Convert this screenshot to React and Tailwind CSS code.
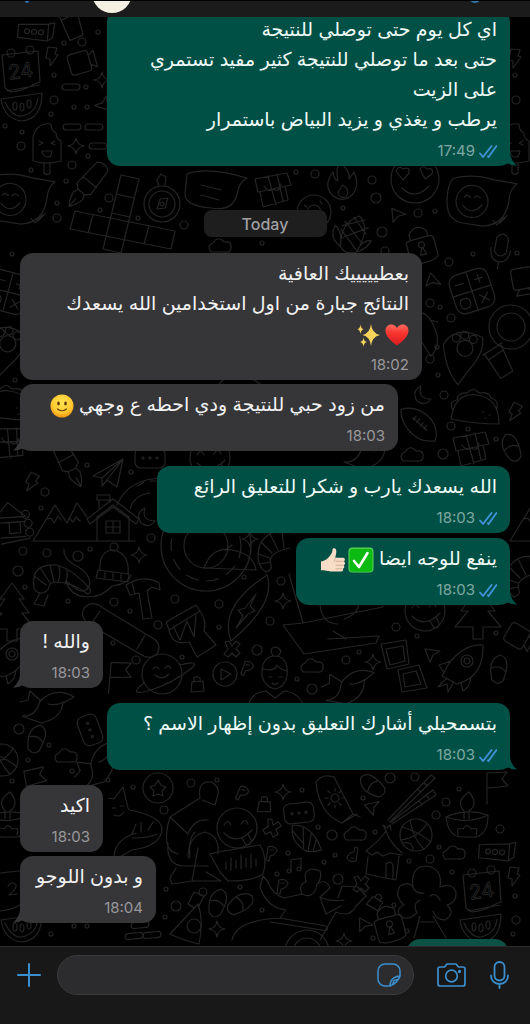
import React from 'react';

const shapes = {
  box: <><path d="M-18-6L12-9 18-11 17 4 12 8-18 7Z M12-9V8" /><circle cx="-9" cy="0" r="2.5" /><circle cx="-2" cy="0" r="2.5" /><circle cx="5" cy="0" r="2.5" /></>,
  calendar: <><path d="M-19-15L17-19 19 12C10 14 9 20-10 22L-16 18Z M-14 21L18 15" /><circle cx="-10" cy="-17" r="4" /><circle cx="9" cy="-20" r="4" /><text x="-13" y="8" fontSize="20" strokeWidth="0.9" transform="rotate(-8)">24</text></>,
  calendarEdge: <><path d="M-19-15L17-19 19 12C10 14 9 20-10 22L-16 18Z" /><path d="M-2-3Q2-9 6-4Q7 0-1 6L7 5" /></>,
  bolt: <path d="M-4-9L5-8 3-2 6-1-2 10-2 3-6 2Z" />,
  video: <path d="M-12-8Q-12-11-8-11L6-11Q9-11 9-8V7Q9 10 6 10L-8 10Q-12 10-12 7Z M9-5L15-9V8L9 4" />,
  star: <path d="M0-8Q1-1 8 0Q1 1 0 8Q-1 1-8 0Q-1-1 0-8Z" />,
  pill: <rect x="-9" y="-3" width="18" height="6" rx="3" />,
  melon: <><path d="M-21-6L20-12Q20 14 0 16Q-18 14-21-6Z M-17-3Q-10 12 0 11Q14 8 16-7" /><ellipse cx="-7" cy="1" rx="2" ry="4" /><ellipse cx="0" cy="2" rx="2" ry="4" /><ellipse cx="7" cy="-1" rx="2" ry="4" /></>,
  cursor: <path d="M-7-6L8-4 1 0-2 7Z" />,
  icepop: <path d="M-14 16V-8Q-10-23 4-21Q4-14 9-12Q9-6 14-4V16Q0 20-14 16Z M-3 18V28Q0 31 3 28V18 M-8-4l4 2-4 2 M8-4l-4 2 4 2 M-5 6H5Q4 13 0 12Q-4 12-5 6" />,
  pen: <path d="M-7-24Q0-30 7-24L9 5 4 9H-4L-9 5Z M-4 9L-6 14Q-5 21 0 28Q5 21 6 14L4 9 M0 28V18 M-9-4H9" />,
  smileBubble: <><path d="M-30-22Q-12-28 10-23L34-20Q27-14 27-4Q25 22 2 24L-18 22Q-36 20-35-3Q-35-16-30-22Z" /><circle cx="-10" cy="0" r="16" /><path d="M-18-4q3-4 6 0 M-8-4q3-4 6 0 M-19 4Q-10 15 0 3 M12 18l4 4 7-8 M19 20l7-8" /></>,
  grid: <path d="M-14-40L4-36-14 38-32 34Z M-19-21L-1-17 M-23-2L-5 2 M-60-4L40 16 36 34-65 14Z M-42 0L-47 18 M14 11L9 29" />,
  compass: <><circle r="18" cy="3" /><circle r="13" cy="3" /><path d="M-3-15l-2-6 4-6 5 3-1 9 M-5 8L-2-2 6-3 3 7Z" /><circle cy="3" r="2" /></>,
  bubble: <path d="M-28-16Q-8-24 32-12Q24-8 22 4Q18 22-4 18Q-30 16-30 4Z M-14-5L6 0 M-14 5L4 10" />,
  gift: <path d="M-18-10L14-16 18-4-15 3Z M-13 3L-10 18 15 11 12-3 M-5-13L3 16 M4-15L10 12 M-9-3Q-4 4 0 0Q7 4 8-5" />,
  flame: <path d="M-3-19Q8-9 6-2L11-9Q17 4 10 13Q0 23-11 14Q-20 4-10-9Q-9-1-5 0Q-8-12-3-19Z M0 4Q8 10 3 16Q-4 18-5 11Z" />,
  donut: <><circle r="17" /><circle r="7" /><path d="M-10-7l3 2 M6-11l2 3 M11 2l-4 1 M-11 6l4 0" /></>,
  heartFace: <><circle r="24" /><path d="M-19-8Q-16-14-12-10Q-5-13-6-6L-12 1Z M5-10Q9-15 12-10Q19-12 17-5L10 0Z M-13 9Q0 22 14 7" /></>,
  corn: <path d="M-8 18Q-16-5 0-17Q15-8 9 18 M-13 2L8 16 M-12-7L10 7 M-5-14L12-2 M12-9L-10 10 M6-15L-13-2 M-8 18Q-22 14-20 0Q-11 3-8 18Q0 25 9 18Q18 12 19 2Q10 5 9 18" />,
  calculator: <><rect x="-20" y="-20" width="40" height="40" rx="9" /><path d="M0-20V20 M-20 0H20 M-14-10H-6 M6-10H14 M10-14V-6 M6 6l8 8 M14 6l-8 8" /><rect x="-15" y="5" width="10" height="10" rx="4" /></>,
  lock: <path d="M-14-3Q-15-7-8-7H8Q14-7 14-3V14Q12 18 0 18Q-14 18-14 13Z M-9-7V-13Q0-23 9-13V-7 M0 3a3 3 0 1 1 1 0l2 7h-6Z" />,
  bag: <path d="M-5-2L6-3 7 7-6 8Z M-3-2V-6Q0-9 3-6V-2" />,
  mic: <path d="M-6-10Q0-18 6-10V4Q0 12-6 4Z M-10 1Q-9 14 0 14Q9 14 10 1 M0 14V21" />,
  paw: <><path d="M-20-8Q-10-30 18-20Q22-6 10 12L0 30Q-14 18-20-8Z" /><circle cx="2" cy="-7" r="8" /><circle cx="-8" cy="-16" r="4" /><circle cx="0" cy="-20" r="4" /><circle cx="9" cy="-17" r="4" /></>,
  cup: <path d="M-10-14L9-16 7 14-7 15Z M-12-14L11-16 M-9-7L8-9" />,
  moon: <path d="M-2-9Q-6 4 8 4Q2 12-6 6Q-12-4-2-9Z" />,
  football: <path d="M-21-10Q-6-18 10-6Q20 4 18 15Q2 20-10 9Q-20 0-21-10Z M-8-4L8 6 M-5-6l-2 4 M-1-4l-2 4 M3-1l-2 4 M7 1l-2 4" />,
  taco: <path d="M-24 9Q-20-18 2-15Q24-12 24 14Q0 14-24 9Z M-22 0Q-27-8-18-10Q-17-18-8-17Q-2-24 4-17Q14-19 16-12Q24-10 22-2 M8 2h1 M14 5h1 M10 8h1" />,
  plane: <path d="M-14 3L16-14 10 14 0 7-5 13-5 5Z M-5 5L16-14 0 7" />,
  mountain: <path d="M-30 22L-8-14 4 4 14-16 24-2 M-16 0l4-1 3 5 4-7 3 4 M6-1l4 4 3-5 4 4 M-30 22H72 M34 22V-2L50-14 66-2V22 M24 0L50-20 76 0 73 5 50-12 27 5Z M43 2H57V14H43Z M50 2V14 M43 8H57 M36-11V-19 M46-18V-19 M34-24H47V-19H34Z" />,
  rainbow: <path d="M-33-6Q-22-33 14-33 M-20-2Q-16-16 0-18 M-12-25l6-4 M0-30h6" />,
  planet: <><circle r="20" /><path d="M-18 9Q-35 22-14 17Q12 9 31-7Q37-14 18-9 M-9-5q3-4 6 0 M3-6q3-4 6 0 M-7 1Q0 7 7 0" /></>,
  tree: <path d="M0-29L-12-13H-7L-17 1H-10L-23 17H-5V29H5V17H23L10 1H17L7-13H12Z" />,
  shrimp: <path d="M-20 8Q-24-17 3-15Q20-10 36 9Q38 12 34 14Q18 2 1 2Q-5 2-6 10Q-15 17-20 8Z M-20-4L-8 5 M-13-11L-4 3 M-4-15L0 2 M5-14Q7-5 4 2 M13-10Q14-3 11 4 M-14 13L-20 24-10 26-6 15" />,
  croissant: <path d="M-14 22Q-26 14-20-6Q-10-24 14-17 M-14 22Q-6 20-10 12Q-10 2 10-2 M-22 4L-10 8 M-19-8L-8 3 M-10-16L-2 0 M2-19L4-2 M-20 14L-10 12" />,
  beanie: <><path d="M-13 2Q-14-18 1-18Q17-14 15 6 M-15 2L16 6 15 14-17 10Z M-8 4v6 M0 5v6 M8 6v6" /><circle cx="1" cy="-21" r="4" /></>,
  hammer: <path d="M-18-13Q0-24 15-15L16-8 8-11 3-7 8 20-1 21-5-5-14-3Z M-12-15l3 11" />,
  snake: <path d="M-26-23Q-27-14-17-8Q-1 0 0 11Q-3 22-12 18L-24 9 M-24 9Q-20 24-3 25Q13 25 22 14Q38 12 41 3" />,
  skate: <path d="M-35-22Q-27-29-17-21L34 10Q43 17 36 26Q29 31 20 25L-33-6Q-41-14-35-22Z M-20-18l-8 12 M25 6l-8 14" />,
  drum: <path d="M-24-6L6-23 10-17-21 2Z M-21 2Q-18 18-1 14L7 29 26 17 14 3Q17-8 10-17 M-16 0L-10 12-3-7 4 9 6-13" />,
  surf: <path d="M19-33Q29-5-17 33Q-30-1 19-33Z M8-14L-3 0-10 2-5 8-12 20 0 6 7 3 2-2Z" />,
  rings: <><circle r="45" /><circle r="35" strokeDasharray="12 9" /><circle r="22" /></>,
  dome: <path d="M-26 8Q-18-14 2-10Q24-6 26 10Z M-4-10L2-15" />,
  laptop: <path d="M-49-43L-35 6 M-35 6L45-10 43-20 M-35 6L-55 8-34 37 38 26 41 19-10 22 M-5 14l13 8 M-18-12Q-16 7 0 7 M20-20Q24-4 6 2" />,
  face: <><circle r="20" /><path d="M-13-3q4-7 7 0 M4-4q4-7 7 0 M-13 5Q0 18 15 2 M5 10l4 7q6 0 5-5l-3-6" /></>,
  play: <><circle r="12" /><path d="M-4-5L6 0-4 6Z" /></>,
  cross: <path d="M-7-7L-3-8 0-3 4-8 8-5 4 0 8 4 4 8 0 4-4 8-8 5-4 0Z" />,
  cloud: <path d="M-10 6Q-15 0-8-3Q-3-11 3-4Q11-5 10 2Q10 7 3 6Z" />,
  person: <path d="M-13 2Q-14-18 0-18Q14-17 12 2Q9 14 0 15Q-10 13-13 2Z M-12-5Q0-2 2-9Q6-4 12-3 M-2-18q-5-8 3-9q8 3 2 9 M-27 33Q-24 18-9 17L0 24 9 17Q24 18 29 33 M-6 3h3 M4 3h3 M-3 9q3 3 6 0" />,
  photos: <path d="M-16-20L9-24 12 0-10 5Z M-11-15L6-18 8-3-7 1Z M1 6L22 1 30 24 5 28Z M6 10L19 7 24 20 8 23Z" />,
  rocket: <><path d="M20-22Q0-23-15-2L-21 9-6 17Q21 10 20-22Z M-12-6L-24-2-19 6 M-2 16L0 24Q7 20 8 10 M-17 12l-8 8 9-3 1 8 5-9" /><circle cx="4" cy="-6" r="6" /><circle cx="4" cy="-6" r="3" /></>,
  flag: <path d="M-7 18V-13L13-14 8-7 14 0-6 2" />,
  cat: <path d="M-33-32L-28-31-19-43-15-26Q-14-20-12-20Q18-14 20-2Q20 16-10 20L-28 30Q-29 10-6 3 M-30-22h4 M-22-24h4 M-28-15Q-22-12-18-18 M-10 4l4-10 M-1 2V-8 M6 0l5-8 M-10 8Q8 8 15 4" />,
  starBadge: <><circle r="15" /><path d="M0-8L3-3 8-1 4 3 5 8 0 6-5 8-4 3-8-1-3-3Z" /></>,
  kneel: <path d="M10-36Q7-54 22-52Q30-46 28-40L25-29 12-34 M10-36L-20-17-2 0 M-20-17Q-30 16-12 20 M-2 0Q4-16 18-14 M-22 9Q-24 30-8 32H18 M5-2Q-2 4 0 24 M-2 24Q-2 2 15-2Q30 2 28 20 M2 47L8 14 M2 47L-18 50-20 44-14 34 M2 47H31L16 38" />,
  wave: <path d="M-22-9L20-16Q28-2 23 13Q14 20-12 20L-20 11-30-7Z M-14 1v7 M-9-3v12 M-4-1v8 M1-6v14 M6-3v9 M11-7v14 M16-2v7" />,
  dots: <><rect x="-15" y="-10" width="30" height="20" rx="6" /><circle cx="-7" r="1" /><circle r="1" /><circle cx="7" r="1" /></>,
  tube: <><path d="M-19-18Q-13-27-1-23L18 14 7 23Q-16 14-19-18Z M7 23L22 14 M18 14l7 3" /><circle r="4" cy="-2" /><path d="M0-12v3 M0 5v3 M-10-2h3 M7-2h3 M-7-9l2 2 M6-9l-2 2 M-7 5l2-2 M6 5l-2-2" /></>,
  sticks: <path d="M-24 21L19-24 23-21-22 23 M-21 23L21-9 24-4-20 25 M5-10l4 3 M12-16l4 3 M7 2l3 4 M14-4l3 4" />,
  candle: <path d="M-21 2Q-19 21-6 22H9Q21 19 21 0Q0-7-21 2Q0 10 21 0 M-3 4V-4Q-12-14 2-23Q12-11 2-4V4 M-9 20Q-11 11-4 14Q0 7 4 14Q12 11 9 20" />,
  ball: <><circle r="16" /><path d="M-14-8Q3-3 15 7 M-15 5Q4 2 11-12 M-6-15Q-3 4 8 14 M-3 15Q-3 6-14 8" /></>,
  hut: <path d="M-16-4Q-3-14 4-24Q8-12 20-2 M-16-4l6 4 5-3 6 4 7-3 12 2 M-14 2L-16 19 14 25 17 1 M4 22V9Q9 5 11 10V24 M4-24l-3-6 4 3 3-3 1 5" />,
  cabin: <><path d="M-22-5L-8-20 9-5 M-17-5H8 M-17 0H8 M-17 15H8 M-17 21L12 17 M-8 0H3V11H-8Z" /><circle cx="9" cy="-7" r="4" /><circle cx="11" cy="2" r="4" /><circle cx="12" cy="11" r="4" /></>,
  shell: <path d="M-16-12Q-2-16 10-3L17 7 10 10 3 11Q-15 6-16-12Z M-14-6L-2 4 M-5-12L-1 8 M4-7L4 10 M10-2L9 9" />,
  note: <><path d="M-3 5V-6L7-8V3" /><circle cx="-5" cy="5" r="2" /><circle cx="5" cy="3" r="2" /></>,
  leaf: <path d="M-4-6Q2-8 5-3Q4 2-2 3L-3 8-6 7Z M-2-3h3" />,
  oak: <path d="M-9 13Q-22 24-28 12Q-27 7-22 5Q-32-4-26-14Q-17-19-13-13Q-16-33 0-34Q17-32 14-13Q26-18 30-8Q31 2 21 5Q30 14 19 20Q10 20 7 11 M-13-13Q-11-6-2-7 M-9 13Q-14 4-6 0 M4-4Q10-8 14 0 M-6 16L-12 38 M7 16L20 38 M-6 22H8" />,
  shoe: <path d="M-8 12Q-13-8 0-13Q12-10 3 13Q-3 18-8 12Z M-8 0Q0-3 5 3" />,
  whale: <path d="M-26 10Q-12 11-8-5Q8-20 26-9L15-3Q13 13-7 17Z M-7-5L-18-15-20-6-28-4 M0-2Q8 0 16-4" />,
  dancer: <path d="M-43-16L-38-10Q-34 2-22 6L-4 2 M-43-16L-46-5Q-39 16-20 18L-26 26 M-4 2Q-8-8 0-10L-1-17Q2-26 14-21Q16-14 12-9 M-4 2Q8 8 11-8Q20-14 24-4L14 5Q24 10 38 8 M14 5L20 22 35 14 M30 20L14 48 M30 20Q44 26 50 14L60 4 52-5 36-6 32 6 M-26 26Q-70 28-74 48 M-26 26L20 34Q24 40 16 38L-36 30" />,
  tyre: <><circle r="22" /><circle r="14" /></>,
  party: <><path d="M-20 12L8-18Q14-2 9 22Q-8 18-20 12Z M4-14L-2-18 4-30 14-26 8-14" /><circle cx="4" cy="4" r="7" /></>,
};

// shape, x, y, rotation
const doodles = [
  ['box', 36, 32, 5], ['calendar', 21, 70, 0], ['bolt', 52, 56, 0], ['video', 81, 63, -16], ['star', 102, 80, 0], ['pill', 71, 87, 0],
  ['melon', 22, 105, 0], ['cursor', 103, 103, 190], ['icepop', 47, 145, 0], ['star', 76, 146, 0], ['pill', 72, 127, 0], ['pill', 94, 127, 0],
  ['pill', 98, 146, 0], ['pen', 87, 185, 40], ['smileBubble', 20, 200, 3], ['grid', 135, 215, 0], ['compass', 162, 201, 0], ['bubble', 215, 190, 0],
  ['gift', 273, 189, 0], ['flame', 343, 181, 0], ['donut', 314, 212, 0], ['heartFace', 415, 179, 0], ['smileBubble', 482, 202, 3],
  ['cursor', 397, 216, 15], ['corn', 354, 232, 20], ['lock', 421, 245, -15], ['cloud', 221, 246, 0], ['mic', 501, 248, 10],
  ['calculator', 472, 291, -18], ['cursor', 432, 282, 40], ['video', 522, 280, 80], ['dome', 424, 329, 55], ['paw', 462, 355, 8], ['cup', 500, 362, -28],
  ['tyre', 511, 327, 0], ['moon', 423, 395, 0], ['football', 420, 423, 10], ['taco', 475, 410, 0], ['bolt', 515, 412, 20], ['gift', 471, 448, 0],
  ['calculator', 8, 292, 15], ['paw', 4, 350, 15], ['taco', 8, 406, 0], ['gift', 10, 442, 10], ['shoe', 512, 446, -30], ['cloud', 413, 455, 0],
  ['pen', 68, 462, -28], ['plane', 107, 473, 0], ['bolt', 32, 482, 20], ['mountain', 63, 519, 0], ['rainbow', 150, 511, 0], ['moon', 147, 517, 0],
  ['cabin', 17, 522, -4], ['dots', 150, 458, 0], ['face', 210, 458, 0], ['whale', 370, 452, 0], ['mountain', 540, 519, 0], ['rings', 206, 546, 0],
  ['dome', 230, 560, 0], ['star', 250, 539, 0], ['croissant', 280, 550, 0], ['tree', 12, 612, 0], ['shrimp', 54, 580, 0], ['snake', 90, 572, 0], ['beanie', 113, 568, 0],
  ['star', 139, 555, 0], ['hammer', 144, 598, 0], ['skate', 120, 629, 0], ['drum', 190, 628, 0], ['surf', 248, 608, 0], ['star', 283, 601, 0],
  ['laptop', 338, 617, 0], ['face', 425, 611, 0], ['tree', 478, 610, 0], ['croissant', 528, 575, 0], ['rocket', 8, 660, 0], ['flag', 117, 676, 5],
  ['planet', 162, 674, 0], ['cross', 232, 649, 0], ['play', 225, 674, 0], ['bag', 197, 684, 0], ['person', 275, 674, 0], ['leaf', 248, 668, 10],
  ['cloud', 313, 666, 0], ['whale', 350, 686, -10], ['star', 373, 662, 0], ['photos', 397, 664, 0], ['cursor', 432, 655, 0], ['rocket', 463, 667, 0],
  ['shoe', 500, 668, 0], ['video', 518, 637, 30], ['shoe', 38, 738, 10], ['whale', 48, 706, 0], ['dots', 90, 730, 70], ['cloud', 67, 756, 0],
  ['ball', 2, 760, 0], ['whale', 100, 764, -35], ['flag', 33, 783, -10], ['candle', 8, 815, 0], ['cat', 142, 830, 0], ['starBadge', 158, 788, 0],
  ['kneel', 190, 834, 0], ['face', 237, 828, 0], ['wave', 240, 861, 0], ['leaf', 243, 793, 15], ['star', 283, 792, 0], ['bag', 264, 804, 5],
  ['cross', 272, 828, 20], ['dots', 299, 813, -6], ['shell', 306, 840, 10], ['tube', 335, 800, 0], ['cursor', 373, 808, -20], ['cloud', 356, 834, 0],
  ['shoe', 372, 784, -60], ['sticks', 412, 799, 0], ['flag', 494, 786, 0], ['ball', 416, 835, 0], ['candle', 467, 815, 0], ['hut', 382, 855, 0],
  ['leaf', 272, 853, 0], ['note', 294, 866, 0], ['leaf', 352, 855, 180], ['cloud', 455, 853, 0], ['box', 497, 852, 4], ['oak', 426, 900, 0],
  ['calendar', 482, 890, 0], ['bolt', 514, 876, 0], ['cross', 361, 884, 0], ['dancer', 306, 892, 0], ['tyre', 307, 952, 0], ['leaf', 283, 886, 0],
  ['shoe', 219, 902, 10], ['shoe', 242, 904, 50], ['bag', 376, 901, 35], ['party', 190, 922, 0], ['melon', 22, 926, 0],
  ['melon', 481, 926, 0], ['star', 217, 929, 0], ['pill', 140, 925, -5], ['pill', 134, 936, -5], ['pill', 152, 935, -5], ['cursor', 364, 926, 20],
  ['lock', 389, 924, -15], ['calendarEdge', 10, 889, 0], ['star', 344, 941, 0], ['icepop', 515, 145, 0],
  ['bolt', 515, 58, 0], ['cup', 72, 24, -18], ['dome', 240, 386, 0],
];

const rings = [
  [98, 32, 2], [64, 43, 2], [82, 42, 4], [54, 75, 2], [86, 87, 2], [54, 100, 4], [74, 107, 2], [87, 107, 2], [51, 114, 2], [5, 126, 2], [22, 132, 2],
  [21, 146, 4], [88, 156, 2], [72, 165, 4], [31, 170, 2], [66, 181, 2], [109, 198, 4], [57, 203, 2], [100, 210, 2], [57, 218, 4], [138, 218, 2],
  [184, 225, 4], [296, 172, 2], [315, 174, 4], [372, 180, 4], [376, 198, 5], [343, 208, 2], [418, 213, 4], [435, 211, 2], [382, 232, 5], [515, 75, 2],
  [516, 100, 4], [12, 254, 2], [262, 243, 2], [385, 251, 4], [473, 254, 2], [449, 262, 4], [517, 253, 2], [430, 303, 4], [440, 307, 2], [451, 318, 4],
  [437, 347, 2], [430, 359, 4], [438, 375, 2], [15, 380, 2], [444, 395, 4], [451, 426, 4], [468, 429, 2], [496, 439, 2], [443, 454, 5], [87, 465, 2],
  [45, 492, 4], [131, 472, 2], [41, 508, 2], [151, 538, 4], [23, 551, 4], [47, 553, 4], [90, 549, 2], [18, 571, 5], [25, 587, 2], [68, 601, 2],
  [78, 556, 5], [114, 602, 4], [130, 611, 2], [158, 625, 4], [175, 599, 4], [219, 604, 4], [281, 581, 4], [244, 577, 2], [270, 621, 4], [257, 650, 5],
  [219, 627, 2], [182, 657, 2], [136, 660, 4], [113, 643, 2], [396, 627, 4], [346, 660, 4], [359, 652, 2], [417, 636, 2], [312, 689, 5], [297, 679, 2],
  [496, 633, 2], [19, 729, 5], [49, 745, 2], [28, 760, 2], [72, 771, 2], [12, 781, 2], [108, 780, 2], [133, 787, 2], [191, 783, 4], [217, 780, 2],
  [164, 810, 4], [302, 790, 2], [318, 827, 2], [332, 835, 5], [288, 853, 2], [335, 855, 2], [324, 862, 2], [277, 874, 2], [338, 879, 5], [363, 798, 2],
  [375, 832, 2], [415, 777, 4], [390, 778, 5], [446, 802, 4], [459, 789, 2], [436, 815, 4], [439, 847, 2], [430, 859, 4], [409, 861, 2], [452, 872, 2],
  [500, 829, 4], [240, 887, 2], [203, 892, 4], [166, 889, 2], [176, 906, 5], [165, 917, 2], [262, 910, 2], [394, 905, 2], [51, 934, 2], [407, 931, 2],
  [373, 938, 2], [516, 920, 4], [513, 934, 2], [74, 926, 2], [87, 926, 2], [515, 896, 2],
];

const Wallpaper = () => (
  <svg className="absolute inset-x-0 -top-[17px] w-full min-w-[530px] h-[1024px] text-[#242424]" viewBox="0 0 530 1024" preserveAspectRatio="xMinYMin slice" fill="none" stroke="currentColor" strokeWidth="1.2" strokeLinecap="round" strokeLinejoin="round" fontFamily="Inter, sans-serif" aria-hidden="true">
    {doodles.map(([name, x, y, r], i) => (
      <g key={i} transform={`translate(${x} ${y}) rotate(${r})`}>{shapes[name]}</g>
    ))}
    {rings.map(([x, y, r], i) => <circle key={i} cx={x} cy={y} r={r} />)}
  </svg>
);

const Heart = () => (
  <svg className="inline-block w-6 h-6 align-middle" viewBox="0 0 24 24" role="img" aria-label="❤️">
    <defs>
      <linearGradient id="heart" x1="0" y1="0" x2="0" y2="1">
        <stop offset="0" stopColor="#ff6b60" /><stop offset="0.4" stopColor="#f8352f" /><stop offset="1" stopColor="#d91a1e" />
      </linearGradient>
    </defs>
    <path fill="url(#heart)" d="M12 22.5C7 19 .5 14 .5 7.6.5 4 3 1.5 6.3 1.5c2.500 0 4.600 1.300 5.700 3.600 1.100-2.300 3.200-3.600 5.700-3.600 3.300 0 5.800 2.500 5.800 6.100C23.500 14 17 19 12 22.500z" />
  </svg>
);

const Sparkles = () => (
  <svg className="inline-block w-6 h-6 align-middle mr-1" viewBox="0 0 24 24" fill="#f6d45c" role="img" aria-label="✨">
    <path d="M14 1q.9 9.300 9 11-8 1.700-9 11-1-9.300-8.500-11Q13 10.300 14 1z" />
    <path d="M3.500 1.500q.4 4 3.200 4.700-2.800.7-3.200 4.800Q3.100 6.900.3 6.200 3.100 5.500 3.500 1.500z" />
    <path d="M6.500 14.500q.4 4 3.500 4.500-3.100.7-3.500 4.700-.4-4-3.500-4.700 3.100-.5 3.500-4.500z" />
  </svg>
);

const Smile = () => (
  <svg className="inline-block w-6 h-6 align-middle" viewBox="0 0 24 24" role="img" aria-label="🙂">
    <defs>
      <radialGradient id="smile" cx="0.5" cy="0.35" r="0.65">
        <stop offset="0" stopColor="#ffe552" /><stop offset="0.7" stopColor="#fdc62e" /><stop offset="1" stopColor="#ee9313" />
      </radialGradient>
    </defs>
    <circle cx="12" cy="12" r="11.500" fill="url(#smile)" />
    <ellipse cx="8.500" cy="9.500" rx="1.300" ry="2" fill="#5f3a0b" />
    <ellipse cx="15.500" cy="9.500" rx="1.300" ry="2" fill="#5f3a0b" />
    <path d="M7.500 15q4.500 3.500 9 0" fill="none" stroke="#6d420c" strokeWidth="1.200" strokeLinecap="round" />
  </svg>
);

const Check = () => (
  <svg className="inline-block w-[26px] h-[26px] align-middle" viewBox="0 0 26 26" role="img" aria-label="✅">
    <rect x="0.5" y="0.5" width="25" height="25" rx="4" fill="#5fd45c" />
    <rect x="1.500" y="1.800" width="23" height="23" rx="3" fill="#0cba12" />
    <path d="M6 14l5 6L19.500 6" fill="none" stroke="#fff" strokeWidth="2.600" strokeLinecap="round" strokeLinejoin="round" />
  </svg>
);

const Thumb = () => (
  <svg className="inline-block w-[26px] h-[26px] align-middle mr-0.5" viewBox="0 0 26 26" role="img" aria-label="👍🏻">
    <path d="M1 14.500c3-.5 5-1.500 7-3.500 2.600-2.700 4.500-5 4.500-8.500 0-1.500 3.200-2.200 3.700.8.500 3-.7 5.200-.9 7.400h7.700c2.200 0 2.500 3 .8 3.700 1.800.8 1.500 3.300-.2 3.800 1.300 1 .8 3.200-.8 3.500.8 1.200 0 2.900-1.700 2.900H12c-4 0-5.500-1.500-11-1.300z" fill="#f7dcc6" />
    <path d="M16 14.300h7.300M16 18.200h7M16 21.800h6M16 10.800c-1.500 1-2 2-1.500 3.500" fill="none" stroke="#cfa88d" strokeWidth="0.9" strokeLinecap="round" />
  </svg>
);

const Ticks = () => (
  <svg className="w-[18px] h-[13px]" viewBox="0 0 18 13" fill="none" stroke="#3f95dc" strokeWidth="1.800" strokeLinecap="round" strokeLinejoin="round" role="img" aria-label="Read">
    <path d="M1 8.500L4 12 12.500 1M9 11.500l.5.5L17.500 1" />
  </svg>
);

const Bubble = ({ sent, tail, width, time, className = '', children }) => (
  <article
    className={`relative max-w-full rounded-[13px] px-[13px] pt-1.5 pb-[5px] ${width} ${className} ${
      sent ? 'self-end bg-[#015046] text-[#effaf7]' : 'self-start bg-[#363638] text-[#f1f1f2]'
    }`}
  >
    {tail && (
      <svg
        className={`absolute bottom-0 w-5 h-5 ${sent ? '-right-[7px] text-[#015046]' : '-left-[7px] -scale-x-100 text-[#363638]'}`}
        viewBox="0 0 20 20"
        fill="currentColor"
        aria-hidden="true"
      >
        <path d="M13 2v5q1 8 7 12.500-5 .5-9-2-5 2.500-11 2.500V2z" />
      </svg>
    )}
    <p dir="rtl" className="relative text-[19px] leading-[30px]">{children}</p>
    <div className="relative mt-1.5 flex h-5 items-center justify-end gap-1 text-[15px]">
      <time className={sent ? 'text-[#7fa8a2]' : 'text-[#98989b]'}>{time}</time>
      {sent && <Ticks />}
    </div>
  </article>
);

const Header = () => (
  <header className="relative z-10 h-[17px] shrink-0 overflow-hidden border-t border-black bg-[#1b1b1b]">
    <div className="flex items-end justify-between pl-[25px] pr-[49px] h-3">
      <div className="flex items-end">
        <span className="mb-2.5 h-1 w-1 shrink-0 rounded-full bg-[#2f78ad]"></span>
        <span className="ml-[63px] h-10 w-10 shrink-0 rounded-full bg-[#f4f0e2]"></span>
      </div>
      <span className="mb-2.5 h-3 w-3 shrink-0 rounded-full border-2 border-[#2f78ad]"></span>
    </div>
  </header>
);

const Composer = () => (
  <footer className="relative z-10 flex h-[78px] shrink-0 items-start border-t border-[#2b2b2b] bg-[#181818] pt-2 pl-[17px] pr-[21px] text-[#3b8fce]">
    <button type="button" aria-label="Attach" className="flex h-10 w-6 items-center">
      <svg className="w-6 h-6" viewBox="0 0 24 24" fill="none" stroke="currentColor" strokeWidth="2" strokeLinecap="round"><path d="M12 1v22M1 12h22" /></svg>
    </button>
    <div className="ml-4 flex h-10 min-w-0 flex-1 items-center rounded-full border border-[#3a3a3c] bg-[#2c2c2e] pl-4 pr-3">
      <input type="text" aria-label="Message" className="min-w-0 flex-1 bg-transparent text-base text-white outline-none" />
      <button type="button" aria-label="Stickers">
        <svg className="w-6 h-6" viewBox="0 0 24 24" fill="none" stroke="currentColor" strokeWidth="1.500" strokeLinejoin="round">
          <path d="M23 13V8a7 7 0 0 0-7-7H8a7 7 0 0 0-7 7v8a7 7 0 0 0 7 7h5C17 22 22 17 23 13zM13 23c0-6 4-10 10-10M15.500 22c1-1.500.5-3.500 1.500-4.500s4-.5 5-1.500" />
        </svg>
      </button>
    </div>
    <button type="button" aria-label="Camera" className="ml-[23px] flex h-10 w-[29px] items-center">
      <svg className="w-[29px] h-6" viewBox="0 0 29 24" fill="none" stroke="currentColor" strokeWidth="1.700" strokeLinejoin="round">
        <path d="M3 4h4.500L10 1h9l2.500 3H26a2 2 0 0 1 2 2v15a2 2 0 0 1-2 2H3a2 2 0 0 1-2-2V6a2 2 0 0 1 2-2z" />
        <circle cx="14.500" cy="13" r="5.800" />
        <circle cx="22.500" cy="8.500" r="0.8" fill="currentColor" />
      </svg>
    </button>
    <button type="button" aria-label="Voice message" className="ml-6 flex h-10 w-[19px] items-center">
      <svg className="w-[19px] h-7" viewBox="0 0 19 28" fill="none" stroke="currentColor" strokeWidth="1.800" strokeLinecap="round">
        <rect x="4.500" y="1" width="10" height="18.500" rx="5" />
        <path d="M1 14.500c0 5 3.500 8.500 8.500 8.500s8.500-3.500 8.500-8.500M9.500 23v4" />
      </svg>
    </button>
  </footer>
);

const App = () => {
  return (
    <div className="flex h-screen flex-col overflow-hidden bg-black font-['Inter','DejaVu_Sans',sans-serif]">
      <Header />
      <main className="relative min-h-0 flex-1 overflow-hidden">
        <Wallpaper />
        <div className="relative flex flex-col px-5">
          <Bubble sent tail width="w-[403px]" time="17:49" className="-mt-2">
            اي كل يوم حتى توصلي للنتيجة<br />
            حتى بعد ما توصلي للنتيجة كثير مفيد تستمري<br />
            على الزيت<br />
            يرطب و يغذي و يزيد البياض باستمرار
          </Bubble>
          <div className="mt-11 flex h-[27px] w-[123px] items-center justify-center self-center rounded-lg bg-[#1e1e1f] text-base font-medium text-[#a0a0a2]">
            Today
          </div>
          <Bubble width="w-[402px]" time="18:02" className="mt-4">
            بعطيييييك العافية<br />
            النتائج جبارة من اول استخدامين الله يسعدك<br />
            <Heart /><Sparkles />
          </Bubble>
          <Bubble tail width="w-[378px]" time="18:03" className="mt-1">
            من زود حبي للنتيجة ودي احطه ع وجهي <Smile />
          </Bubble>
          <Bubble sent width="w-[353px]" time="18:03" className="mt-[15px]">
            الله يسعدك يارب و شكرا للتعليق الرائع
          </Bubble>
          <Bubble sent tail width="w-[214px]" time="18:03" className="mt-[5px]">
            ينفع للوجه ايضا <Check /><Thumb />
          </Bubble>
          <Bubble tail width="w-[83px]" time="18:03" className="mt-4">
            والله !
          </Bubble>
          <Bubble sent tail width="w-[403px]" time="18:03" className="mt-[15px]">
            بتسمحيلي أشارك التعليق بدون إظهار الاسم ؟
          </Bubble>
          <Bubble width="w-[83px]" time="18:03" className="mt-[15px]">
            اكيد
          </Bubble>
          <Bubble tail width="w-[136px]" time="18:04" className="mt-1">
            و بدون اللوجو
          </Bubble>
          <div className="mt-4 mr-0.5 h-16 w-[101px] self-end rounded-[13px] bg-[#0c5143]"></div>
        </div>
      </main>
      <Composer />
    </div>
  );
};

export default App;
